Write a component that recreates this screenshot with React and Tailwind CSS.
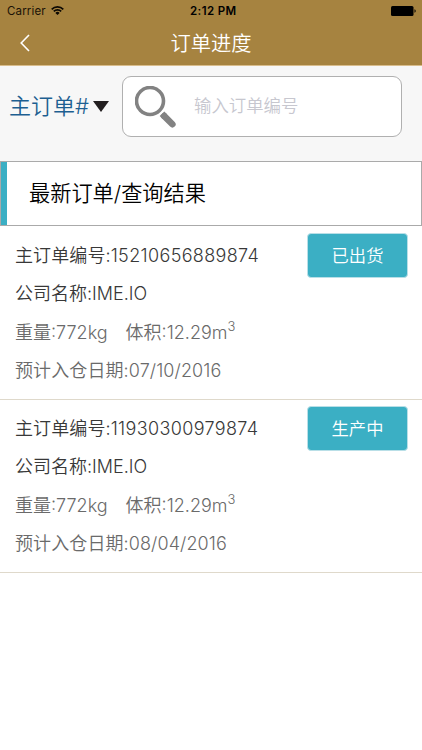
import React, { useState } from 'react';

const ORDERS = [
  { id: '15210656889874', company: 'IME.IO', weight: '772kg', volume: '12.29m', date: '07/10/2016', status: '已出货' },
  { id: '11930300979874', company: 'IME.IO', weight: '772kg', volume: '12.29m', date: '08/04/2016', status: '生产中' },
];

function StatusBar() {
  return (
    <div className="relative flex h-[21px] items-center justify-between pt-[2px] pl-[7px] pr-[6px] text-[11.5px] text-black">
      <div className="flex items-center gap-[5px]">
        <span className="tracking-[0.15px] text-[#1a1206]">Carrier</span>
        <svg className="-mt-[2px] h-[9px] w-[13px]" viewBox="0 0 13 9" fill="none" stroke="#0d0903" strokeWidth="1.7">
          <path d="M0.7 3.3a8.2 8.2 0 0 1 11.6 0" />
          <path d="M2.8 5.4a5.2 5.2 0 0 1 7.4 0" />
          <path d="M6.5 9 4.4 6.9a3 3 0 0 1 4.2 0Z" fill="#0d0903" stroke="none" />
        </svg>
      </div>
      <span className="absolute left-[190px] font-semibold tracking-[0.4px]">2:12 PM</span>
      <svg className="-mt-[2px] h-[10px] w-[25px]" viewBox="0 0 25 10">
        <rect x="0" y="0" width="22.5" height="10" rx="1.5" fill="#000" />
        <path d="M23.5 3.3c1.6.5 1.6 2.9 0 3.4Z" fill="#000" />
      </svg>
    </div>
  );
}

function Header() {
  return (
    <header className="h-[66px] border-b border-[#d9bd8c] bg-[#a68340]">
      <StatusBar />
      <div className="grid h-[44px] grid-cols-[1fr_auto_1fr] items-center text-white">
        <button className="ml-[20px] h-[18px] w-[10px]">
          <svg className="h-[18px] w-[10px]" viewBox="0 0 10 18" fill="none" stroke="#fff" strokeWidth="1.6">
            <path d="M9 1 1.2 9 9 17" />
          </svg>
        </button>
        <h1 className="mt-[2px] text-[20.3px] leading-[28px] font-[350]">订单进度</h1>
      </div>
    </header>
  );
}

function SearchBar() {
  const [query, setQuery] = useState('');

  return (
    <div className="flex h-[95px] items-start bg-[#f7f7f7] pt-[10px] pl-[9px]">
      <button className="flex h-[61px] w-[113px] items-center text-[22px] font-[350] text-[#1d5f91]">
        <span>主订单#</span>
        <svg className="ml-[4px] h-[11px] w-[16px]" viewBox="0 0 16 11">
          <path d="M0 0h16L8 11Z" fill="#231f20" />
        </svg>
      </button>
      <div className="flex h-[61px] w-[280px] items-center rounded-[9px] border border-[#b0b0b0] bg-white pl-[12px]">
        <svg className="h-[42px] w-[42px] shrink-0" viewBox="0 0 42 42" fill="none" stroke="#828282">
          <circle cx="15" cy="15" r="13.5" strokeWidth="3.6" />
          <path d="M27 27.8 29.8 30.6" strokeWidth="6.5" />
          <path d="M29.3 30.1 37.4 38.2" strokeWidth="6.5" strokeLinecap="round" />
        </svg>
        <input
          value={query}
          onChange={(e) => setQuery(e.target.value)}
          placeholder="输入订单编号"
          className="ml-[17px] w-[190px] bg-transparent text-[17.4px] font-[350] outline-none placeholder:text-[#c7c7cf]"
        />
      </div>
    </div>
  );
}

function OrderCard({ order }) {
  return (
    <li className="flex h-[173px] justify-between border-b border-[#dfd9cb] pt-[6px] pr-[14px] pl-[15px]">
      <div className="pt-[4px] text-[18px] leading-[38.3px] font-[350] whitespace-nowrap text-[#6a6a6a]">
        <p className="text-[#383838]">
          <span className="tracking-[0.1px]">主订单编号:</span>
          <span className="tracking-[0.35px]">{order.id}</span>
        </p>
        <p className="text-[#383838]">公司名称:{order.company}</p>
        <p className="flex">
          <span>重量:{order.weight}</span>
          <span className="ml-[18px]">
            体积:{order.volume}
            <sup className="-top-[8px] text-[13px]">3</sup>
          </span>
        </p>
        <p className="tracking-[0.1px]">预计入仓日期:{order.date}</p>
      </div>
      <button className="h-[45px] w-[101px] rounded-[4px] border border-[#b9dfe7] bg-[#3bafc4] text-[17.3px] font-[350] text-white">
        {order.status}
      </button>
    </li>
  );
}

export default function App() {
  return (
    <div className="h-[750px] w-[422px] overflow-hidden bg-white font-[Inter,'Noto_Sans_CJK_SC',sans-serif]">
      <Header />
      <SearchBar />
      <div className="flex h-[65px] items-center border border-[#aaa] bg-white">
        <div className="h-full w-[6px] bg-[#3bafc4]" />
        <h2 className="ml-[22px] text-[21.2px] font-[350] text-black">最新订单/查询结果</h2>
      </div>
      <ul className="pt-px">
        {ORDERS.map((order) => (
          <OrderCard key={order.id} order={order} />
        ))}
      </ul>
    </div>
  );
}
